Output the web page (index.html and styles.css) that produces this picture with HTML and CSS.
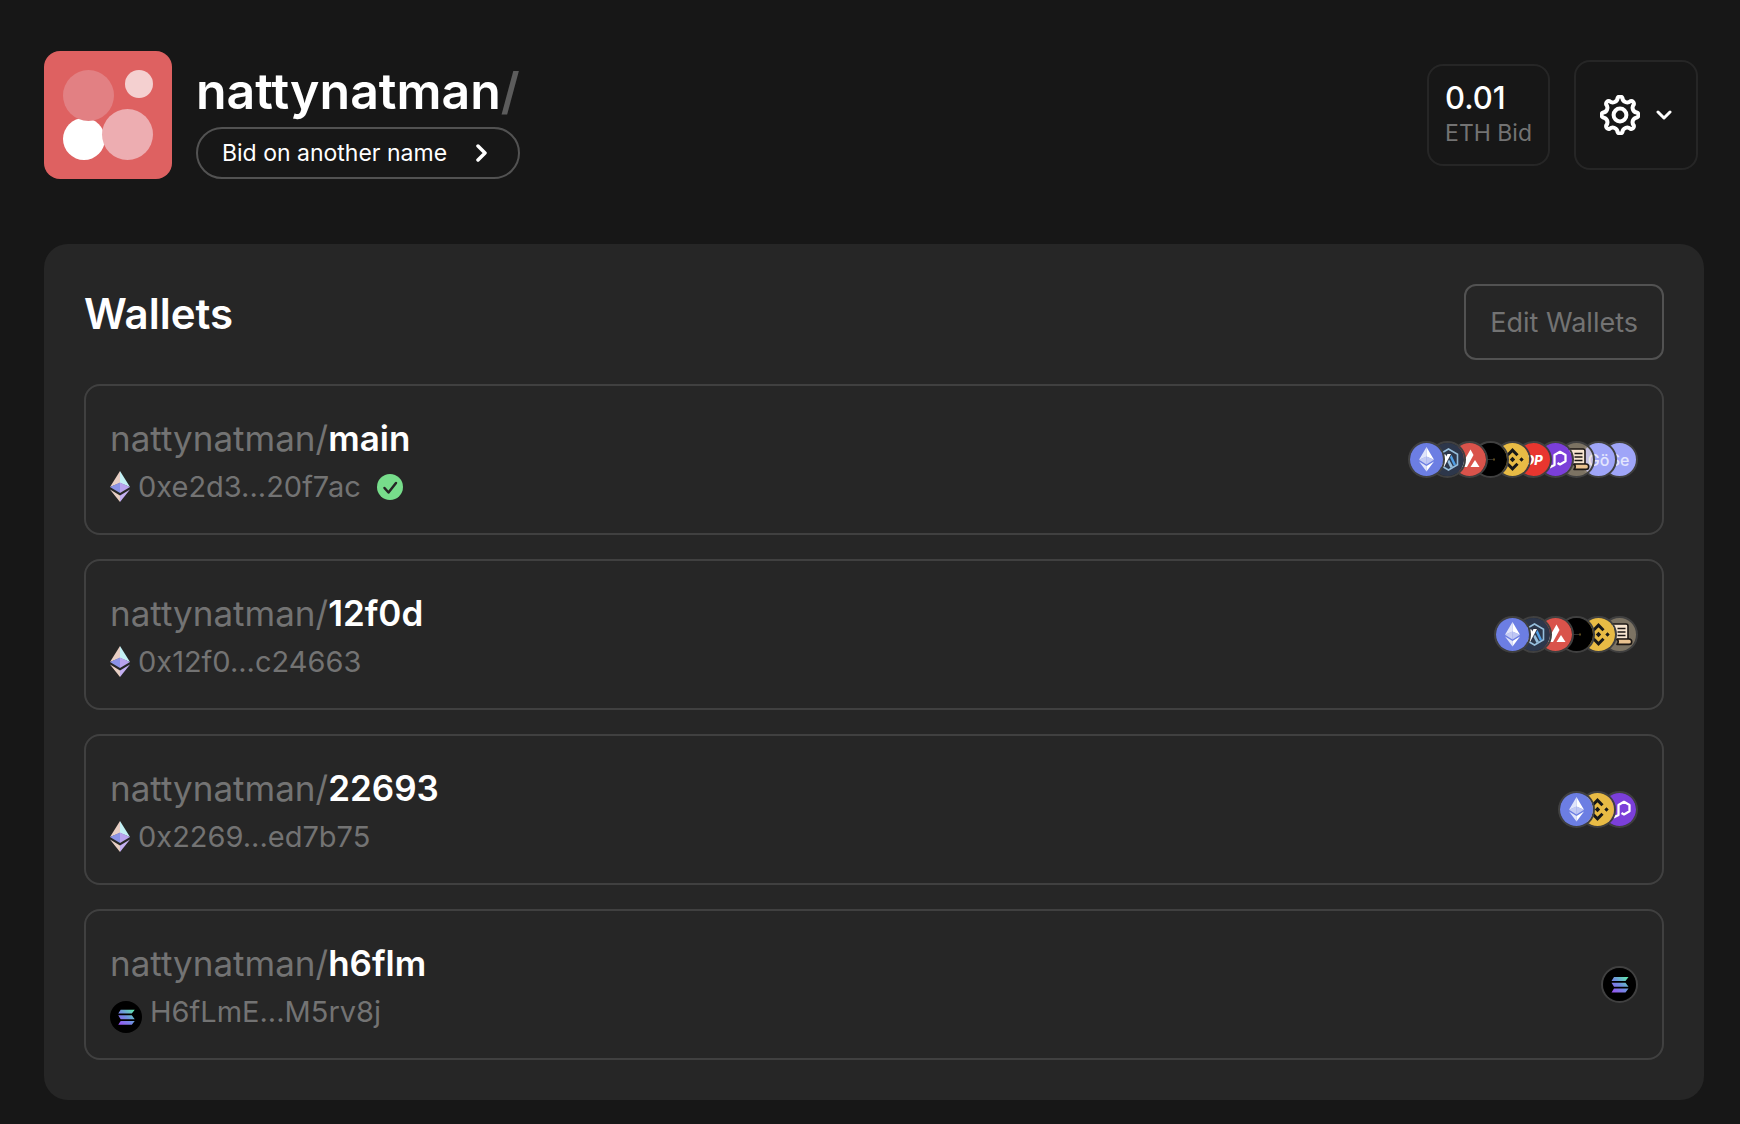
FILE: index.html
```html
<!DOCTYPE html>
<html lang="en">
<head>
<meta charset="utf-8">
<meta name="viewport" content="width=device-width, initial-scale=1">
<title>nattynatman/ – Wallets</title>
<link rel="stylesheet" href="styles.css">
</head>
<body>
<svg class="sprite" aria-hidden="true">
  <defs>
    <linearGradient id="sol-fill" x1="0" y1="1" x2="1" y2="0">
      <stop offset="0" stop-color="#9b4df5"/><stop offset="0.5" stop-color="#6f8fe0"/><stop offset="1" stop-color="#5ff0a8"/>
    </linearGradient>
  </defs>
  <symbol id="eth-color" viewBox="0 0 20 31">
    <path fill="#e8cfc4" d="M10 0 0 16l10-4z"/><path fill="#c4f1f5" d="M10 0v12l10 4z"/>
    <path fill="#8a92e6" d="M0 16l10-4.500V22z"/><path fill="#b9a3ee" d="M20 16l-10-4.500V22z"/>
    <path fill="#e8cfc4" d="M0 18.500 10 31v-6.500z"/><path fill="#c4b0f2" d="M20 18.500 10 31v-6.500z"/>
  </symbol>
  <symbol id="eth" viewBox="0 0 33 33">
    <rect width="33" height="33" fill="#6c7ee3"/>
    <path fill="#fff" opacity=".8" d="M16.500 4 9 16.800l7.500-3.400z"/><path fill="#fff" d="M16.500 4v9.400l7.500 3.400z"/>
    <path fill="#fff" opacity=".6" d="M9 16.800l7.500-3.400v8z"/><path fill="#d3d8f8" opacity=".8" d="M24 16.800l-7.500-3.400v8z"/>
    <path fill="#fff" opacity=".8" d="M9 18.500l7.500 10v-5.600z"/><path fill="#fff" d="M24 18.500l-7.500 10v-5.600z"/>
  </symbol>
  <symbol id="arb" viewBox="0 0 33 33">
    <rect width="33" height="33" fill="#2d374b"/>
    <path fill="none" stroke="#96bedc" stroke-width="1.600" d="M17.500 6 26.500 11.200v10.600l-9 5.200-9-5.200V11.200z"/>
    <path fill="#fff" d="M10.500 22.500 16.500 11h3.500l-7 13z"/><path fill="#fff" d="M11.500 11.500h3l1.500 3.500-1.500 3z"/>
    <path fill="#4f9fe6" d="M19 14.500l1.500-2.500 4.500 9.500-2 1.500z"/><path fill="#96bedc" d="M16.500 19l1.500-2.500 4 7-2.500 1.500z"/>
  </symbol>
  <symbol id="avax" viewBox="0 0 33 33">
    <rect width="33" height="33" fill="#d9534b"/>
    <path fill="#fff" d="M17.500 6.500 20.500 12 14 24H7.500z"/><path fill="#fff" d="M22 17l4.500 7h-9z"/>
  </symbol>
  <symbol id="dark" viewBox="0 0 33 33">
    <rect width="33" height="33" fill="#000"/>
    <path fill="#2e2e2e" d="M11 16h8v1h-8z"/><path fill="#5c4a1c" d="M19 15.500h2v2h-2z"/>
  </symbol>
  <symbol id="bnb" viewBox="0 0 33 33">
    <rect width="33" height="33" fill="#e8bb45"/>
    <g fill="none" stroke="#181818" stroke-width="3"><path d="M11.500 12.200l5-5 5 5"/><path d="M11.500 20.800l5 5 5-5"/></g>
    <path fill="#181818" d="M16.500 13.800l2.700 2.700-2.700 2.700-2.700-2.700zM7.500 14.300l2.200 2.200-2.200 2.200-2.200-2.200zM25.500 14.300l2.200 2.200-2.200 2.200-2.200-2.200z"/>
  </symbol>
  <symbol id="polygon" viewBox="0 0 33 33">
    <rect width="33" height="33" fill="#7b3fd9"/>
    <path fill="none" stroke="#fff" stroke-width="2.300" stroke-linejoin="round" d="M10.500 24.500l5-2.600V12l5.500-3.200 5.500 3.200v6.200L21 21.400l-2.500-1.500"/>
  </symbol>
  <symbol id="scroll" viewBox="0 0 33 33">
    <g stroke="#1c1714" stroke-width="1.600" stroke-linejoin="round"><path fill="#f7e5d0" d="M9 6h14q2 0 2 2v13.500H12V11.500H9q-2.500-2.700 0-5.500z"/><path fill="#eac28f" d="M14 21h12a2.700 2.700 0 0 1 0 5.400H14q2.500-2.700 0-5.400z"/></g>
    <path stroke="#1c1714" stroke-width="1.400" d="M14.500 10.500h8M14.500 14h8M14.500 17.500h8"/>
  </symbol>
  <symbol id="sol" viewBox="0 0 33 33">
    <rect width="33" height="33" fill="#000"/>
    <path fill="url(#sol-fill)" d="M11 9h14.500l-3 4H8.500zM8.500 14.800h14l3 4H11zM11 20.500h14.500l-3 4H8.500z"/>
  </symbol>
</svg>

<header class="profile">
  <svg class="avatar" viewBox="0 0 128 128" role="img" aria-label="Avatar">
    <rect width="128" height="128" fill="#de6161"/>
    <circle cx="40" cy="88" r="21" fill="#fff"/>
    <circle cx="44.500" cy="44.500" r="25.500" fill="#e28083"/>
    <circle cx="95" cy="33" r="14" fill="#f4d0d0"/>
    <circle cx="83.500" cy="83.500" r="25.500" fill="#edadb1"/>
  </svg>
  <div class="identity">
    <h1 class="handle">nattynatman<span class="slash">/</span></h1>
    <button class="bid-button" type="button">Bid on another name
      <svg width="12" height="20" viewBox="0 0 12 20" fill="none" stroke="#fff" stroke-width="3.500" stroke-linecap="round" stroke-linejoin="round" aria-hidden="true"><path d="M2 3l7 7-7 7"/></svg>
    </button>
  </div>
  <div class="bid-card">
    <span class="bid-amount">0.01</span>
    <span class="bid-label">ETH Bid</span>
  </div>
  <button class="settings" type="button" aria-label="Settings">
    <svg width="40" height="40" viewBox="0 0 40 40" fill="none" stroke="#fff" stroke-width="4" aria-hidden="true">
      <path d="M37.030 17.610A2.670 2.670 0 0 1 37.030 22.390A4.860 4.860 0 0 0 33.740 30.350A2.670 2.670 0 0 1 30.350 33.740A4.860 4.860 0 0 0 22.390 37.030A2.670 2.670 0 0 1 17.610 37.030A4.860 4.860 0 0 0 9.650 33.740A2.670 2.670 0 0 1 6.260 30.350A4.860 4.860 0 0 0 2.970 22.390A2.670 2.670 0 0 1 2.970 17.610A4.860 4.860 0 0 0 6.260 9.650A2.670 2.670 0 0 1 9.650 6.260A4.860 4.860 0 0 0 17.610 2.970A2.670 2.670 0 0 1 22.390 2.970A4.860 4.860 0 0 0 30.350 6.260A2.670 2.670 0 0 1 33.740 9.650A4.860 4.860 0 0 0 37.030 17.610Z"/>
      <circle cx="20" cy="20" r="6.400"/>
    </svg>
    <svg width="16" height="10" viewBox="0 0 16 10" fill="none" stroke="#fff" stroke-width="3" stroke-linecap="round" stroke-linejoin="round" aria-hidden="true"><path d="M2 2l6 6 6-6"/></svg>
  </button>
</header>

<main class="panel">
  <div class="panel-head">
    <h2 class="panel-title">Wallets</h2>
    <button class="edit-button" type="button">Edit Wallets</button>
  </div>
  <ul class="wallets">
    <li class="wallet">
      <div>
        <h3 class="name">nattynatman/<b>main</b></h3>
        <p class="address"><svg class="mark"><use href="#eth-color"/></svg>0xe2d3...20f7ac
          <svg class="verified" viewBox="0 0 26 26" role="img" aria-label="Verified"><circle cx="13" cy="13" r="13" fill="#77dd8b"/><path d="M7.500 14l4 4.500 7.500-9.500" fill="none" stroke="#262626" stroke-width="2.500" stroke-linecap="round" stroke-linejoin="round"/></svg></p>
      </div>
      <ul class="chains">
        <li class="chain"><svg><use href="#eth"/></svg></li>
        <li class="chain"><svg><use href="#arb"/></svg></li>
        <li class="chain"><svg><use href="#avax"/></svg></li>
        <li class="chain"><svg><use href="#dark"/></svg></li>
        <li class="chain"><svg><use href="#bnb"/></svg></li>
        <li class="chain chain-op">OP</li>
        <li class="chain"><svg><use href="#polygon"/></svg></li>
        <li class="chain chain-scroll"><svg><use href="#scroll"/></svg></li>
        <li class="chain chain-test">Gö</li>
        <li class="chain chain-test">Se</li>
      </ul>
    </li>
    <li class="wallet">
      <div>
        <h3 class="name">nattynatman/<b>12f0d</b></h3>
        <p class="address"><svg class="mark"><use href="#eth-color"/></svg>0x12f0...c24663</p>
      </div>
      <ul class="chains">
        <li class="chain"><svg><use href="#eth"/></svg></li>
        <li class="chain"><svg><use href="#arb"/></svg></li>
        <li class="chain"><svg><use href="#avax"/></svg></li>
        <li class="chain"><svg><use href="#dark"/></svg></li>
        <li class="chain"><svg><use href="#bnb"/></svg></li>
        <li class="chain chain-scroll"><svg><use href="#scroll"/></svg></li>
      </ul>
    </li>
    <li class="wallet">
      <div>
        <h3 class="name">nattynatman/<b>22693</b></h3>
        <p class="address"><svg class="mark"><use href="#eth-color"/></svg>0x2269...ed7b75</p>
      </div>
      <ul class="chains">
        <li class="chain"><svg><use href="#eth"/></svg></li>
        <li class="chain"><svg><use href="#bnb"/></svg></li>
        <li class="chain"><svg><use href="#polygon"/></svg></li>
      </ul>
    </li>
    <li class="wallet">
      <div>
        <h3 class="name">nattynatman/<b>h6flm</b></h3>
        <p class="address"><svg class="mark mark-round"><use href="#sol"/></svg>H6fLmE...M5rv8j</p>
      </div>
      <ul class="chains">
        <li class="chain"><svg><use href="#sol"/></svg></li>
      </ul>
    </li>
  </ul>
</main>
</body>
</html>
```
FILE: styles.css
```css
* { box-sizing: border-box; }

body {
  margin: 0;
  padding: 51px 36px 24px 44px;
  background: #171717;
  color: #fff;
  font-family: Inter, "Liberation Sans", sans-serif;
}

h1, h2, h3, p, ul { margin: 0; padding: 0; font-weight: 500; }
ul { list-style: none; }
button { font: inherit; color: inherit; background: none; cursor: pointer; }
svg { display: block; flex: none; }

.sprite { position: absolute; width: 0; height: 0; }

/* Header */
.profile { display: flex; align-items: center; gap: 24px; padding-right: 6px; }
.avatar { width: 128px; height: 128px; border-radius: 16px; }
.identity { display: flex; flex-direction: column; align-self: flex-end; gap: 6px; margin-right: auto; }
.handle { font-size: 50px; line-height: 60px; font-weight: 600; }
.slash { color: #5c5c5c; }

.bid-button {
  display: flex;
  align-items: center;
  justify-content: space-between;
  height: 52px;
  padding: 0 30px 0 24px;
  border: 2px solid #525252;
  border-radius: 26px;
  font-size: 23px;
}

.bid-card {
  display: flex;
  flex-direction: column;
  height: 102px;
  padding: 14px 16px;
  border: 2px solid #262626;
  border-radius: 16px;
}
.bid-amount { font-size: 31px; line-height: 36px; font-weight: 500; }
.bid-label { font-size: 23px; line-height: 34px; color: #737373; }

.settings {
  display: flex;
  align-items: center;
  gap: 16px;
  height: 110px;
  padding: 0 24px;
  border: 2px solid #262626;
  border-radius: 16px;
}

/* Wallet panel */
.panel { margin-top: 65px; padding: 40px; border-radius: 24px; background: #262626; }
.panel-head { display: flex; justify-content: space-between; align-items: flex-start; margin-bottom: 24px; }
.panel-title { font-size: 42px; line-height: 60px; font-weight: 600; }
.edit-button {
  height: 76px;
  padding: 0 24px;
  border: 2px solid #525252;
  border-radius: 12px;
  font-size: 27px;
  color: #737373;
}

.wallets { display: flex; flex-direction: column; gap: 24px; }
.wallet {
  display: flex;
  align-items: center;
  justify-content: space-between;
  height: 151px;
  padding: 0 24px;
  border: 2px solid #404040;
  border-radius: 16px;
}
.name { font-size: 35px; line-height: 48px; font-weight: 400; color: #737373; padding-top: 4px; }
.name b { font-weight: 600; color: #fff; }
.address {
  display: flex;
  align-items: center;
  gap: 8px;
  margin-top: 4px;
  padding-bottom: 2px;
  height: 44px;
  font-size: 29px;
  font-weight: 400;
  color: #737373;
}
.mark { width: 20px; height: 31px; }
.mark-round { align-self: flex-end; width: 32px; height: 32px; border-radius: 50%; }
.verified { width: 26px; height: 26px; margin-left: 8px; }

/* Overlapping chain badges, the first one on top */
.chains { display: flex; isolation: isolate; }
.chain {
  display: flex;
  align-items: center;
  justify-content: center;
  width: 37px;
  height: 37px;
  border: 2px solid #404040;
  border-radius: 50%;
  overflow: hidden;
}
.chain svg { width: 33px; height: 33px; }
.chain + .chain { margin-left: -15px; }
.chain:nth-child(even) { margin-left: -16px; }
.chain:nth-child(1) { z-index: 10; }
.chain:nth-child(2) { z-index: 9; }
.chain:nth-child(3) { z-index: 8; }
.chain:nth-child(4) { z-index: 7; }
.chain:nth-child(5) { z-index: 6; }
.chain:nth-child(6) { z-index: 5; }
.chain:nth-child(7) { z-index: 4; }
.chain:nth-child(8) { z-index: 3; }
.chain:nth-child(9) { z-index: 2; }
.chain:nth-child(10) { z-index: 1; }
.chain-op { background: #e8362f; font-size: 13px; font-weight: 800; font-style: italic; }
.chain-scroll { background: rgba(255, 233, 193, 0.4); }
.chain-test { background: #9fa5f8; font-size: 16px; color: #e4e6fd; }
```
